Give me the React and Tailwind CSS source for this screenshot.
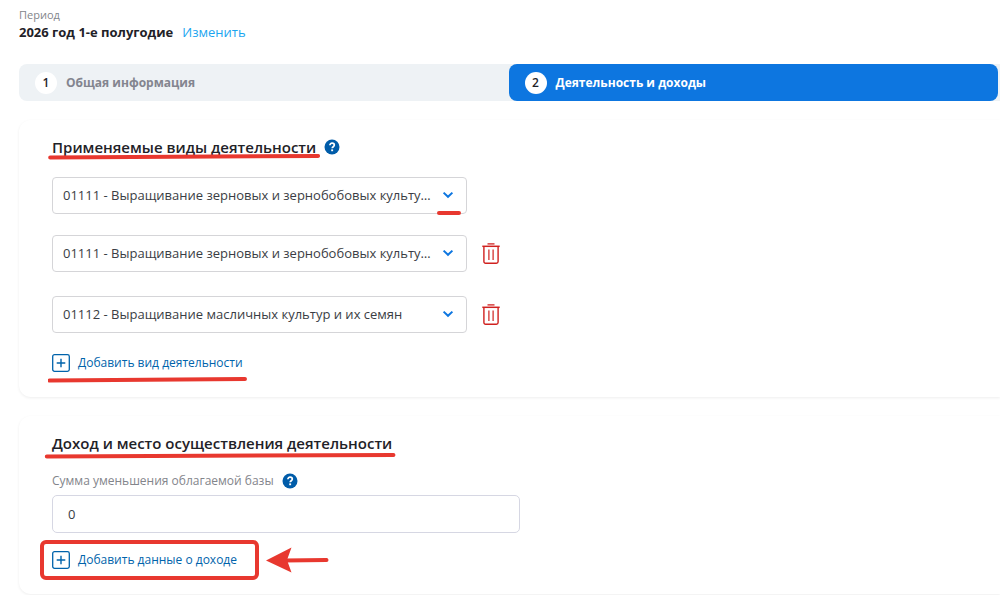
import React, { useState } from 'react';

const ACTIVITIES = [
  { code: '01111', name: 'Выращивание зерновых и зернобобовых культур, включая семеноводство' },
  { code: '01112', name: 'Выращивание масличных культур и их семян' },
];

const HelpButton = ({ label }) => (
  <button type="button" aria-label={label} className="shrink-0 cursor-pointer">
    <svg className="block size-4" viewBox="0 0 16 16" fill="none">
      <circle cx="8" cy="8" r="7.5" fill="#005ca9" />
      <path d="M5.9 6.3C5.9 5 6.8 4.2 8.1 4.2s2.2.8 2.2 1.9c0 1.6-2.1 1.6-2.1 3.2" stroke="#fff" strokeWidth="1.7" />
      <rect x="7.2" y="10.4" width="1.9" height="1.8" fill="#fff" />
    </svg>
  </button>
);

const TrashIcon = () => (
  <svg className="block h-[22px] w-[18px]" viewBox="0 0 18 22" fill="none" stroke="#d0211f">
    <path d="M5.5 0.9h7" strokeWidth="1.3" />
    <path d="M0.3 3.3h17.4" strokeWidth="1.5" />
    <path d="M1.9 4v14.6a1.7 1.7 0 0 0 1.7 1.7h10.8a1.7 1.7 0 0 0 1.7-1.7V4" strokeWidth="1.4" />
    <path d="M6.9 6.5v10.5M11.1 6.5v10.5" strokeWidth="1.2" />
  </svg>
);

const AddButton = ({ children }) => (
  <button type="button" className="flex cursor-pointer items-center gap-2 text-xs leading-5 text-[#0063ab]">
    <svg className="block size-[18px]" viewBox="0 0 18 18" fill="none" stroke="#0063ab">
      <rect x="0.7" y="0.7" width="16.6" height="16.6" rx="1.8" strokeWidth="1.3" />
      <path d="M9 4.7v8.6M4.7 9h8.6" strokeWidth="1.4" />
    </svg>
    {children}
  </button>
);

const Underline = () => (
  <svg className="block h-2 w-full" viewBox="0 0 100 8" preserveAspectRatio="none" fill="none">
    <path d="M0.8 5.5L99.2 4" stroke="#e8382f" strokeWidth="4" strokeLinecap="round" vectorEffect="non-scaling-stroke" />
  </svg>
);

const ActivitySelect = ({ label, value, onChange, marked }) => (
  <div className="relative min-w-0 w-[415px]">
    <select
      aria-label={label}
      value={value}
      onChange={(e) => onChange(e.target.value)}
      className="block h-[37px] w-full appearance-none truncate rounded-[4px] border border-[#d5d5d8] bg-white pl-[10px] pr-8 text-[13px] text-[#3a3d44] outline-none focus:border-[#0d76e0]"
    >
      {ACTIVITIES.map((a) => (
        <option key={a.code} value={a.code}>{a.code} - {a.name}</option>
      ))}
    </select>
    <svg className="pointer-events-none absolute right-[13px] top-[14px] h-2 w-3" viewBox="0 0 12 8" fill="none">
      <path d="M1.6 1.6L6 5.8l4.4-4.2" stroke="#0d76e0" strokeWidth="2" />
    </svg>
    {marked && <span className="absolute right-[6px] -bottom-px h-1 w-6 rounded-full bg-[#e8382f]" />}
  </div>
);

const Card = ({ children }) => (
  <section className="rounded-l-xl bg-white pl-[33px] pr-8 pt-[15px] shadow-[0_1px_3px_rgba(0,0,0,0.07)]">
    {children}
  </section>
);

const App = () => {
  const [mainActivity, setMainActivity] = useState('01111');
  const [extra, setExtra] = useState(['01111', '01112']);
  const [reduction, setReduction] = useState('0');

  const updateExtra = (index, value) => {
    setExtra(extra.map((item, i) => (i === index ? value : item)));
  };

  return (
    <div className="min-h-screen bg-white pl-[19px] pt-[7px] font-['Open_Sans',sans-serif] text-[#1f2228]">
      <header>
        <p className="text-[11px] leading-4 text-[#83858b]">Период</p>
        <div className="flex items-center gap-[9px] text-[13px] leading-[18px]">
          <strong className="font-bold">2026 год 1-е полугодие</strong>
          <a href="#period" className="text-[#1ba5f0]">Изменить</a>
        </div>
      </header>

      {/* Steps */}
      <nav className="mt-[23px] flex rounded-l-lg bg-[#eef2f5] pr-[2px]">
        <button type="button" className="flex h-[37px] flex-1 cursor-pointer items-center gap-[9px] pl-4 text-xs font-bold text-[#83858f]">
          <span className="flex size-[22px] items-center justify-center rounded-full bg-white font-semibold text-[#1f2228]">1</span>
          Общая информация
        </button>
        <button type="button" aria-current="step" className="flex h-[37px] flex-1 cursor-pointer items-center gap-[9px] rounded-lg bg-[#0d76e0] pl-4 text-xs font-bold text-white">
          <span className="flex size-[22px] items-center justify-center rounded-full bg-white font-semibold text-[#1f2228]">2</span>
          Деятельность и доходы
        </button>
      </nav>

      <main className="mt-[19px] flex flex-col gap-[19px]">
        <Card>
          <div className="flex items-center gap-2">
            <h2 className="relative text-[15px] font-semibold leading-6">
              Применяемые виды деятельности
              <span className="absolute -left-1 -right-1 top-[17px]"><Underline /></span>
            </h2>
            <HelpButton label="Справка о видах деятельности" />
          </div>

          <div className="mt-[18px]">
            <ActivitySelect label="Основной вид деятельности" value={mainActivity} onChange={setMainActivity} marked />
          </div>
          <div className="mt-[21px] flex flex-col gap-6">
            {extra.map((value, i) => (
              <div key={i} className="flex items-center gap-[15px]">
                <ActivitySelect label={`Дополнительный вид деятельности ${i + 1}`} value={value} onChange={(v) => updateExtra(i, v)} />
                <button type="button" aria-label="Удалить" className="cursor-pointer" onClick={() => setExtra(extra.filter((_, n) => n !== i))}>
                  <TrashIcon />
                </button>
              </div>
            ))}
          </div>

          <div className="flex pb-6 pt-5">
            <div className="relative">
              <AddButton>Добавить вид деятельности</AddButton>
              <span className="absolute -left-1 -right-1 top-[22px]"><Underline /></span>
            </div>
          </div>
        </Card>

        <Card>
          <div className="flex">
            <h2 className="relative text-[15px] font-semibold leading-6">
              Доход и место осуществления деятельности
              <span className="absolute -left-2 -right-1 top-[20px]"><Underline /></span>
            </h2>
          </div>

          <div className="mt-4 flex items-center gap-2">
            <label htmlFor="reduction" className="text-xs leading-5 text-[#83858b]">Сумма уменьшения облагаемой базы</label>
            <HelpButton label="Справка о сумме уменьшения" />
          </div>
          <input
            id="reduction"
            type="text"
            value={reduction}
            onChange={(e) => setReduction(e.target.value)}
            className="mt-1 block h-[38px] w-full max-w-[468px] rounded-[5px] border border-[#d6d7e3] bg-white px-[15px] text-[13px] text-[#3a3d44] outline-none focus:border-[#0d76e0]"
          />

          <div className="flex pb-6 pt-[17px]">
            <div className="relative">
              <AddButton>Добавить данные о доходе</AddButton>
              <span className="pointer-events-none absolute -bottom-[10px] -left-3 -right-[22px] -top-[10px] rounded-[6px] border-4 border-[#e8382f]" />
              <svg className="absolute -top-[3px] left-[214px] h-[26px] w-[63px]" viewBox="0 0 63 26" fill="none">
                <path d="M18 13.5L60.5 13" stroke="#e8382f" strokeWidth="4" strokeLinecap="round" />
                <path d="M0 13.5L25.5 0.5L21 13L25.5 25.5Z" fill="#e8382f" />
              </svg>
            </div>
          </div>
        </Card>
      </main>
    </div>
  );
};

export default App;
